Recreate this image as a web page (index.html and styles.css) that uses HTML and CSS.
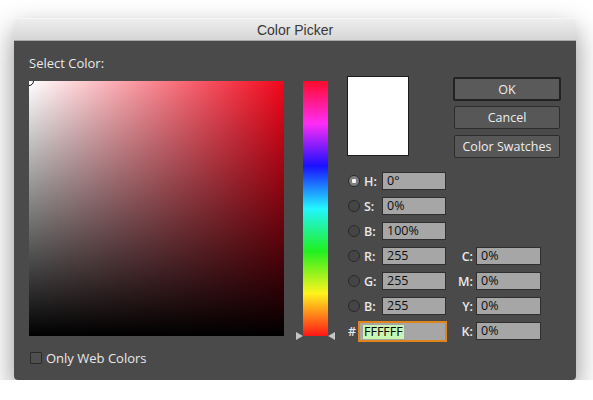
FILE: index.html
```html
<!DOCTYPE html>
<html lang="en">
<head>
    <meta charset="UTF-8">
    <title>Color Picker</title>
    <link rel="stylesheet" href="styles.css">
</head>
<body>
    <div class="window">
        <div class="titlebar">Color Picker</div>
        <div class="panel">
            <div class="picker">
                <div class="picker-label">Select Color:</div>
                <div class="field"><span class="marker"></span></div>
                <div class="web-only"><span class="checkbox"></span>Only Web Colors</div>
            </div>

            <div class="hue">
                <div class="hue-bar"></div>
                <span class="arrow arrow-left"></span>
                <span class="arrow arrow-right"></span>
            </div>

            <div class="controls">
                <div class="controls-top">
                    <div class="preview"></div>
                    <div class="buttons">
                        <button class="btn btn-default">OK</button>
                        <button class="btn">Cancel</button>
                        <button class="btn">Color Swatches</button>
                    </div>
                </div>

                <div class="values">
                    <span class="radio checked"></span><span class="label">H:</span><span class="input">0°</span>
                    <span class="radio"></span><span class="label">S:</span><span class="input">0%</span>
                    <span class="radio"></span><span class="label">B:</span><span class="input">100%</span>

                    <span class="radio"></span><span class="label">R:</span><span class="input">255</span>
                    <span class="cmyk-label">C:</span><span class="input cmyk-input">0%</span>

                    <span class="radio"></span><span class="label">G:</span><span class="input">255</span>
                    <span class="cmyk-label">M:</span><span class="input cmyk-input">0%</span>

                    <span class="radio"></span><span class="label">B:</span><span class="input">255</span>
                    <span class="cmyk-label">Y:</span><span class="input cmyk-input">0%</span>

                    <span class="hash">#</span><span class="input hex"><span class="selected">FFFFFF</span></span>
                    <span class="cmyk-label">K:</span><span class="input cmyk-input">0%</span>
                </div>
            </div>
        </div>
    </div>
</body>
</html>
```

FILE: styles.css
```css
body {
    margin: 0;
    padding: 18px 0 0 14px;
    background-color: #ffffff;
    font-family: 'Open Sans', 'DejaVu Sans', sans-serif;
}

.window {
    width: 562px;
    border-radius: 5px 5px 4px 4px;
    overflow: hidden;
    box-shadow: 0 12px 28px rgba(0, 0, 0, 0.45);
}

.titlebar {
    height: 22px;
    line-height: 23px;
    text-align: center;
    font-family: 'Liberation Sans', Arial, sans-serif;
    font-size: 14px;
    color: #383838;
    background: linear-gradient(#eeeeee, #d6d6d6);
    border-top: 1px solid #f6f6f6;
    border-bottom: 1px solid #a8a8a8;
    box-sizing: border-box;
    height: 23px;
}

.panel {
    display: flex;
    height: 339px;
    padding: 0 15px;
    background-color: #4a4a4a;
    color: #e8e8e8;
    font-size: 12.5px;
}

/* saturation / brightness square */
.picker {
    width: 255px;
    padding-top: 14px;
}

.picker-label {
    line-height: 16px;
    margin-bottom: 10px;
    font-size: 13px;
    font-weight: 500;
}

.field {
    position: relative;
    height: 255px;
    overflow: hidden;
    background:
        linear-gradient(to top, #000, rgba(0, 0, 0, 0)),
        linear-gradient(to right, #fff, #f2061b);
}

.marker {
    position: absolute;
    left: -5px;
    top: -5px;
    width: 8px;
    height: 8px;
    border: 1px solid #111;
    border-radius: 50%;
    box-shadow: 0 0 0 1px #fff;
}

.web-only {
    display: flex;
    align-items: center;
    gap: 4px;
    margin-top: 14px;
    line-height: 16px;
    font-size: 13px;
    font-weight: 500;
}

.checkbox {
    width: 10px;
    height: 10px;
    margin-left: 1px;
    background-color: #4f4f4f;
    border: 1px solid #2a2a2a;
    border-radius: 1px;
}

/* hue slider */
.hue {
    position: relative;
    width: 25px;
    margin-left: 19px;
    padding-top: 40px;
}

.hue-bar {
    height: 255px;
    background: linear-gradient(#ff0a2a, #ff2cf6 16.7%, #1a10ff 33.3%, #22f6ff 50%, #20f020 66.7%, #fff41c 83.3%, #ff1616);
}

.arrow {
    position: absolute;
    top: 291px;
    width: 0;
    height: 0;
    border-top: 4.5px solid transparent;
    border-bottom: 4.5px solid transparent;
}

.arrow-left {
    left: -7px;
    border-left: 7px solid #c4c4c4;
}

.arrow-right {
    right: -7px;
    border-right: 7px solid #c4c4c4;
}

/* right side */
.controls {
    flex: 1;
    margin-left: 19px;
    padding-top: 35px;
}

.controls-top {
    display: flex;
    justify-content: space-between;
    height: 83px;
    margin-bottom: 13px;
}

.preview {
    width: 60px;
    height: 78px;
    background-color: #fff;
    border: 1px solid #1c1c1c;
}

.buttons {
    display: flex;
    flex-direction: column;
    align-items: center;
    gap: 6px;
    width: 108px;
    padding-top: 1px;
}

.btn {
    width: 106px;
    height: 23px;
    padding: 0;
    font-family: inherit;
    font-size: 12.5px;
    font-weight: 500;
    color: #ededed;
    background-color: #575757;
    border: 1px solid #2c2c2c;
    border-radius: 2px;
}

.btn-default {
    width: 108px;
    height: 24px;
    border: 2px solid #222;
    background-color: #5a5a5a;
    margin-bottom: -1px;
}

.values {
    display: grid;
    grid-template-columns: 16px 19px 64px 11px 19px 65px;
    grid-auto-rows: 18px;
    row-gap: 7px;
    align-items: center;
}

.radio {
    grid-column: 1;
    width: 10px;
    height: 10px;
    margin-left: 1px;
    background-color: #454545;
    border: 1px solid #2a2a2a;
    border-radius: 50%;
}

.radio.checked {
    background: radial-gradient(circle, #f4f4f4 0 2px, #7e7e7e 2.5px);
}

.label {
    grid-column: 2;
    padding-left: 1px;
    font-weight: 600;
}

.input {
    grid-column: 3;
    height: 16px;
    padding-left: 4px;
    line-height: 16px;
    font-weight: 500;
    color: #0e0e0e;
    background-color: #a6a6a6;
    border: 1px solid #2f2f2f;
}

.cmyk-label {
    grid-column: 5;
    text-align: right;
    padding-right: 3px;
    font-weight: 600;
}

.cmyk-input {
    grid-column: 6;
}

.hash {
    grid-column: 1;
    padding-left: 1px;
    font-weight: 600;
}

.hex {
    grid-column: 2 / 4;
    height: 17px;
    margin-left: -5px;
    margin-right: -1px;
    padding-left: 3px;
    line-height: 17px;
    border: 2px solid #e0851c;
}

.selected {
    display: inline-block;
    padding: 0 1px;
    line-height: 14px;
    color: #000;
    background-color: #c6f7b2;
}
```
